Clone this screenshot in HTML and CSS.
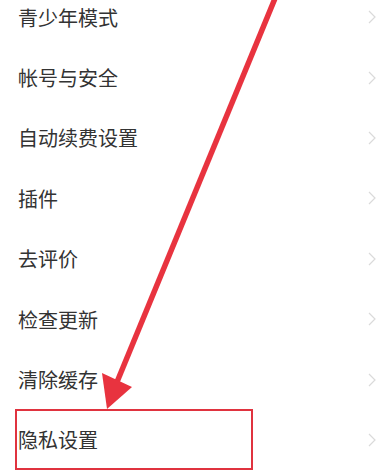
FILE: index.html
```html
<!DOCTYPE html>
<html lang="zh-CN">

<head>
    <meta charset="UTF-8">
    <meta name="viewport" content="width=device-width, initial-scale=1.0">
    <title>设置</title>
    <link rel="stylesheet" href="styles.css">
</head>

<body>

    <ul class="lista">
        <li class="fila"><span>青少年模式</span><svg class="flecha" viewBox="0 0 8 14"><polyline points="1,1 7,7 1,13" /></svg></li>
        <li class="fila"><span>帐号与安全</span><svg class="flecha" viewBox="0 0 8 14"><polyline points="1,1 7,7 1,13" /></svg></li>
        <li class="fila"><span>自动续费设置</span><svg class="flecha" viewBox="0 0 8 14"><polyline points="1,1 7,7 1,13" /></svg></li>
        <li class="fila"><span>插件</span><svg class="flecha" viewBox="0 0 8 14"><polyline points="1,1 7,7 1,13" /></svg></li>
        <li class="fila"><span>去评价</span><svg class="flecha" viewBox="0 0 8 14"><polyline points="1,1 7,7 1,13" /></svg></li>
        <li class="fila"><span>检查更新</span><svg class="flecha" viewBox="0 0 8 14"><polyline points="1,1 7,7 1,13" /></svg></li>
        <li class="fila"><span>清除缓存</span><svg class="flecha" viewBox="0 0 8 14"><polyline points="1,1 7,7 1,13" /></svg></li>
        <li class="fila"><span>隐私设置</span><svg class="flecha" viewBox="0 0 8 14"><polyline points="1,1 7,7 1,13" /></svg></li>
    </ul>

    <!-- marca roja encima -->
    <div class="marco"></div>
    <svg class="anotacion" viewBox="0 0 386 475">
        <line x1="276" y1="-4" x2="117" y2="382" />
        <polygon points="107,409 102,373 132,387" />
    </svg>

</body>

</html>
```

FILE: styles.css
```css
html,
body {
    margin: 0;
    padding: 0;
    background: #fff;
    overflow: hidden;
}

body {
    font-family: "Noto Sans CJK SC", "Noto Sans", sans-serif;
    position: relative;
    height: 475px;
}

.lista {
    list-style: none;
    margin: -13px 0 0 0;
    padding: 0;
}

.fila {
    height: 60.4px;
    display: flex;
    align-items: center;
    justify-content: space-between;
    padding: 0 10px 0 18px;
    font-size: 20px;
    color: #333;
}

.flecha {
    width: 8px;
    height: 14px;
}

.flecha polyline {
    fill: none;
    stroke: #dadada;
    stroke-width: 1.2;
}

.marco {
    position: absolute;
    left: 15px;
    top: 409px;
    width: 234px;
    height: 57px;
    border: 2px solid #e0333f;
}

.anotacion {
    position: absolute;
    left: 0;
    top: 0;
    width: 386px;
    height: 475px;
}

.anotacion line {
    stroke: #e8333f;
    stroke-width: 5.5;
}

.anotacion polygon {
    fill: #e8333f;
}
```
